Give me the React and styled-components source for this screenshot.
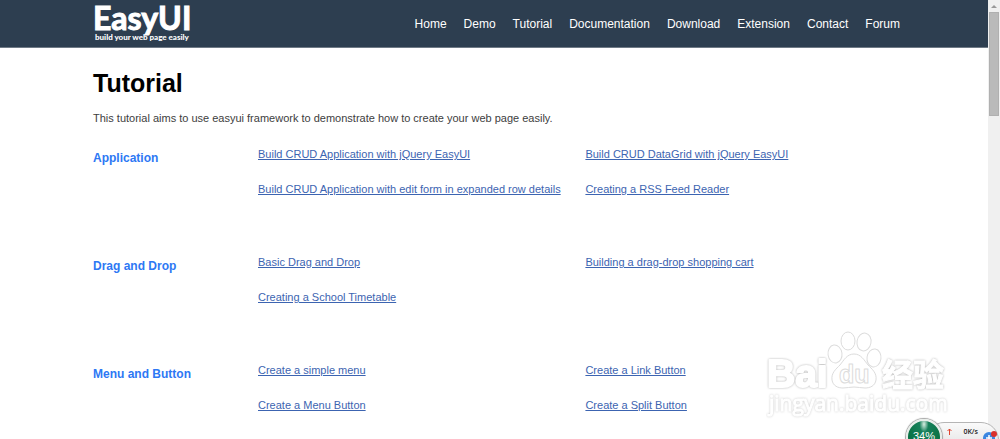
import React from "react";
import styled, { createGlobalStyle } from "styled-components";

const GlobalStyle = createGlobalStyle`
  * {
    box-sizing: border-box;
  }
  body {
    margin: 0;
    background: #fff;
    color: #404040;
    font-family: "Liberation Sans", Arial, sans-serif;
    font-size: 11px;
  }
`;

const Window = styled.div`
  position: relative;
  display: flex;
  height: 100vh;
  overflow: hidden;
`;

const Page = styled.div`
  flex: 1;
  min-width: 0;
`;

const Header = styled.header`
  display: flex;
  justify-content: space-between;
  align-items: center;
  height: 48px;
  padding: 0 88px 0 93px;
  background: #2d3e50;
  border-bottom: 1px solid #6f7a86;
`;

const Logo = styled.a`
  display: flex;
  flex-direction: column;
  color: #fff;
  text-decoration: none;
  white-space: nowrap;
`;

const LogoName = styled.span`
  font-family: Lato, sans-serif;
  font-size: 32px;
  font-weight: 700;
  line-height: 26px;
  -webkit-text-stroke: 1px #fff;
`;

const LogoSlogan = styled.span`
  padding-left: 2px;
  font-family: Lato, sans-serif;
  font-size: 8px;
  font-weight: 900;
  line-height: 12px;
`;

const Nav = styled.nav`
  display: flex;
  gap: 17px;
`;

const NavLink = styled.a`
  color: #fff;
  font-size: 12px;
  line-height: 16px;
  text-decoration: none;
`;

const Main = styled.main`
  padding: 20px 88px 0 93px;
`;

const Title = styled.h1`
  margin: 0;
  color: #000;
  font-size: 25px;
  line-height: 30px;
`;

const Intro = styled.p`
  margin: 12px 0 0;
  line-height: 16px;
`;

const Sections = styled.div`
  display: flex;
  flex-direction: column;
  gap: 57px;
  margin-top: 20px;
`;

const Section = styled.section`
  display: grid;
  grid-template-columns: 165px 1fr;
`;

const SectionTitle = styled.h2`
  margin: 0;
  padding-top: 4px;
  color: #2d78f4;
  font-size: 12px;
  line-height: 16px;
`;

const Links = styled.ul`
  display: grid;
  grid-template-columns: 51% 1fr;
  row-gap: 19px;
  margin: 0;
  padding: 0;
  list-style: none;
  line-height: 16px;
`;

const TopicLink = styled.a`
  color: #3c64b1;
  white-space: nowrap;
`;

const ScrollTrack = styled.div`
  display: flex;
  flex-direction: column;
  align-items: center;
  width: 12px;
  background: #f0f0f0;
`;

const ScrollArrow = styled.svg`
  width: 12px;
  height: 12px;
`;

const ScrollThumb = styled.div`
  width: 10px;
  height: 104px;
  background: #bababa;
  border: 1px solid #b0b0b0;
`;

const Watermark = styled.svg`
  position: absolute;
  right: 50px;
  bottom: 19px;
  width: 184px;
  height: 92px;
`;

const Raised = styled.g`
  fill: #fff;
  stroke: #fff;
  filter: drop-shadow(0 0 1px ${(props) => props.$shade});
`;

const Monitor = styled.div`
  position: absolute;
  right: 0;
  bottom: -24px;
  width: 94px;
  height: 44px;
`;

const Speed = styled.div`
  position: absolute;
  top: 3px;
  left: 20px;
  right: 1px;
  display: flex;
  justify-content: space-between;
  align-items: center;
  height: 36px;
  padding: 0 20px 18px 20px;
  border: 1px solid #b5b5b5;
  border-radius: 18px;
  background: linear-gradient(#fafafa, #dcdcdc);
  color: #222;
  font-family: "Open Sans", sans-serif;
  font-size: 7px;
  font-weight: 600;
`;

const Arrow = styled.svg`
  width: 5px;
  height: 7px;
`;

const Percent = styled.div`
  position: absolute;
  top: 0;
  left: 0;
  width: 36px;
  height: 36px;
  padding-top: 9px;
  border: 2px solid #e8eeea;
  border-radius: 50%;
  box-shadow: 0 0 1px 1px #a5a5a5;
  background: radial-gradient(ellipse at 50% 10%, #d8eee2 0, #16805a 20%, #0a7346 70%);
  color: #fff;
  font-size: 11px;
  line-height: 12px;
  text-align: center;
`;

const AddButton = styled.button`
  position: absolute;
  top: 10px;
  right: 0;
  width: 18px;
  height: 18px;
  padding: 0;
  border: 0;
  background: none;
`;

const navItems = [
  "Home",
  "Demo",
  "Tutorial",
  "Documentation",
  "Download",
  "Extension",
  "Contact",
  "Forum",
];

const topics = [
  {
    title: "Application",
    links: [
      "Build CRUD Application with jQuery EasyUI",
      "Build CRUD DataGrid with jQuery EasyUI",
      "Build CRUD Application with edit form in expanded row details",
      "Creating a RSS Feed Reader",
    ],
  },
  {
    title: "Drag and Drop",
    links: [
      "Basic Drag and Drop",
      "Building a drag-drop shopping cart",
      "Creating a School Timetable",
    ],
  },
  {
    title: "Menu and Button",
    links: [
      "Create a simple menu",
      "Create a Link Button",
      "Create a Menu Button",
      "Create a Split Button",
    ],
  },
];

const BaiduMark = () => (
  <Watermark viewBox="0 0 184 92" aria-hidden="true">
    <Raised $shade="#b4b4b4" strokeWidth="2" strokeLinejoin="round">
      <text x="1" y="59" fontFamily="Liberation Sans, sans-serif" fontSize="39" fontWeight="700">Bai</text>
    </Raised>
    <Raised $shade="#b4b4b4" strokeWidth="1" strokeLinejoin="round">
      <text x="116" y="58" fontFamily="Noto Sans CJK SC, sans-serif" fontSize="31" fontWeight="700">经验</text>
    </Raised>
    <Raised $shade="#cccccc" strokeWidth="1">
      <text x="3" y="83" fontFamily="Open Sans, sans-serif" fontSize="21">jingyan.baidu.com</text>
    </Raised>
    <g fill="#fff" stroke="#dcdcdc" strokeLinejoin="round">
      <ellipse cx="69" cy="26" rx="7" ry="9" transform="rotate(-8 69 26)" />
      <ellipse cx="82" cy="13" rx="7" ry="9" />
      <ellipse cx="98" cy="14" rx="7" ry="9" transform="rotate(10 98 14)" />
      <ellipse cx="108" cy="30" rx="7" ry="9" transform="rotate(8 108 30)" />
      <path d="M88 26c-7 0-10 6-14 11-4 4-9 8-8 15 1 6 6 8 11 8 4 0 7-1 11-1s7 1 11 1c5 0 10-2 11-8 1-7-4-11-8-15-4-5-7-11-14-11z" />
      <text x="73" y="55" fontFamily="Liberation Sans, sans-serif" fontSize="25" fontWeight="700">du</text>
    </g>
  </Watermark>
);

const App = () => {
  return (
    <Window>
      <GlobalStyle />
      <Page>
        <Header>
          <Logo href="#">
            <LogoName>EasyUI</LogoName>
            <LogoSlogan>build your web page easily</LogoSlogan>
          </Logo>
          <Nav>
            {navItems.map((item) => (
              <NavLink href="#" key={item}>{item}</NavLink>
            ))}
          </Nav>
        </Header>
        <Main>
          <Title>Tutorial</Title>
          <Intro>
            This tutorial aims to use easyui framework to demonstrate how to create your web page easily.
          </Intro>
          <Sections>
            {topics.map((topic) => (
              <Section key={topic.title}>
                <SectionTitle>{topic.title}</SectionTitle>
                <Links>
                  {topic.links.map((link) => (
                    <li key={link}>
                      <TopicLink href="#">{link}</TopicLink>
                    </li>
                  ))}
                </Links>
              </Section>
            ))}
          </Sections>
        </Main>
      </Page>
      <ScrollTrack>
        <ScrollArrow viewBox="0 0 12 12">
          <path d="M6 5l3 3H3z" fill="#999" />
        </ScrollArrow>
        <ScrollThumb />
      </ScrollTrack>
      <BaiduMark />
      <Monitor>
        <Speed>
          <Arrow viewBox="0 0 5 7">
            <path d="M2.5 7V1M.5 3l2-2 2 2" fill="none" stroke="#e0452f" />
          </Arrow>
          <span>0K/s</span>
        </Speed>
        <Percent>34%</Percent>
        <AddButton aria-label="Speed up">
          <svg width="18" height="18" viewBox="0 0 18 18">
            <circle cx="7" cy="9" r="6" fill="#3b86e0" />
            <path d="M7 6v6M4 9h6" stroke="#fff" strokeWidth="1.5" />
            <circle cx="12" cy="5" r="3" fill="#d9302c" />
          </svg>
        </AddButton>
      </Monitor>
    </Window>
  );
};

export default App;
